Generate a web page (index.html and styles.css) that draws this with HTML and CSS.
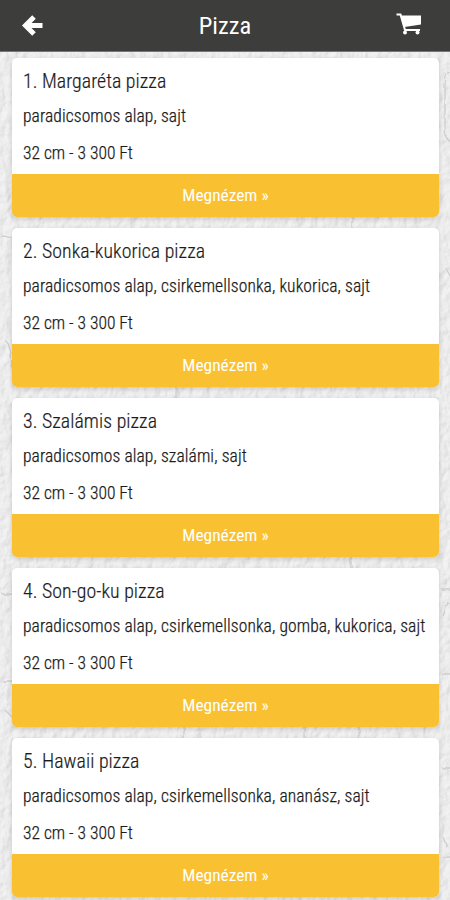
FILE: index.html
```html
<!DOCTYPE html>
<html lang="hu">
<head>
<meta charset="utf-8">
<title>Pizza</title>
<link rel="stylesheet" href="styles.css">
</head>
<body>
<svg class="wall" width="450" height="900" viewBox="0 0 450 900" aria-hidden="true">
  <defs>
    <filter id="plaster" x="0" y="0" width="100%" height="100%" color-interpolation-filters="sRGB">
      <feTurbulence type="fractalNoise" baseFrequency=".12 .09" numOctaves="5" seed="8"/>
      <feDiffuseLighting surfaceScale="1.3" lighting-color="#fff"><feDistantLight azimuth="35" elevation="68"/></feDiffuseLighting>
    </filter>
    <filter id="rough"><feTurbulence type="fractalNoise" baseFrequency=".12" numOctaves="2"/><feDisplacementMap in="SourceGraphic" scale="4"/><feGaussianBlur stdDeviation=".6"/></filter>
  </defs>
  <rect class="texture" width="450" height="900" filter="url(#plaster)"/>
  <g class="joints" filter="url(#rough)">
    <path d="M452 70q-7 3-7 15v45q0 9 7 13M2 236l12 2M2 594h13M2 681h13M442 590h10M442 674h10M442 768h10M442 857h10M352 216v13M176 385v14M351 556v13M184 726v13M304 726v13M359 726v13M5 340q8 8 6 28M5 710l9 9M443 837l4 10M445 267l7 12M443 616l5-14"/>
  </g>
</svg>
<header class="bar">
  <svg class="back" viewBox="0 0 22 24" aria-hidden="true"><path d="M12 3 3.500 11.500l8.500 8.500M4.500 11.500H20.500"/></svg>
  <h1><span>Pizza</span></h1>
  <svg class="cart" viewBox="0 0 26 24" aria-hidden="true"><path class="basket" d="M5 3.500h20v9L8.500 15z"/><path class="frame" d="M.5 2.500H4.500l4.500 15.500H24"/><circle cx="9" cy="20.600" r="2"/><circle cx="21.500" cy="20.600" r="2"/></svg>
</header>
<main>
  <article><div class="info"><h2>1. Margaréta pizza</h2><p>paradicsomos alap, sajt</p><p class="price">32 cm - 3 300 Ft</p></div><a class="view"><span>Megnézem »</span></a></article>
  <article><div class="info"><h2>2. Sonka-kukorica pizza</h2><p>paradicsomos alap, csirkemellsonka, kukorica, sajt</p><p class="price">32 cm - 3 300 Ft</p></div><a class="view"><span>Megnézem »</span></a></article>
  <article><div class="info"><h2>3. Szalámis pizza</h2><p>paradicsomos alap, szalámi, sajt</p><p class="price">32 cm - 3 300 Ft</p></div><a class="view"><span>Megnézem »</span></a></article>
  <article><div class="info"><h2>4. Son-go-ku pizza</h2><p>paradicsomos alap, csirkemellsonka, gomba, kukorica, sajt</p><p class="price">32 cm - 3 300 Ft</p></div><a class="view"><span>Megnézem »</span></a></article>
  <article><div class="info"><h2>5. Hawaii pizza</h2><p>paradicsomos alap, csirkemellsonka, ananász, sajt</p><p class="price">32 cm - 3 300 Ft</p></div><a class="view"><span>Megnézem »</span></a></article>
</main>
</body>
</html>
```
FILE: styles.css
```css
* { box-sizing: border-box; }
body { margin: 0; height: 900px; overflow: hidden; background: #ededed; color: #1c1c1c; font-family: "Roboto Condensed", Roboto, sans-serif; font-stretch: 75%; }
h1, h2, p { margin: 0; font-weight: 400; white-space: nowrap; }
.wall { position: absolute; left: 0; top: 0; z-index: -1; }
.texture { opacity: .4; }
.joints { fill: none; stroke: #cecece; stroke-width: 1.3; }
.bar { height: 52px; background: #3d3d3b; border-bottom: 1px solid #777; display: grid; grid-template-columns: 26px 1fr 26px; align-items: center; padding: 0 28px 2px 22px; color: #fff; }
.bar h1 { font-size: 24.500px; line-height: 30px; text-align: center; padding-left: 6px; margin-top: 2px; }
.back { width: 22px; height: 24px; fill: none; stroke: #fff; stroke-width: 5; margin-top: 2px; }
.cart { width: 26px; height: 24px; fill: #fff; margin-top: -1px; }
.frame { fill: none; stroke: #fff; stroke-width: 2; }
main { display: flex; flex-direction: column; gap: 11px; padding: 6px 11px 0 12px; }
article { height: 159px; flex: none; border-radius: 5px; overflow: hidden; background: #fff; box-shadow: 0 2px 5px rgba(0,0,0,.16); display: flex; flex-direction: column; }
.info { height: 116px; padding: 12px 11px 0; }
h2 { font-size: 19.800px; line-height: 24px; font-weight: 300; letter-spacing: .06px; -webkit-text-stroke: .2px currentColor; }
p { font-size: 17.500px; line-height: 20px; margin-top: 12px; font-weight: 300; letter-spacing: .09px; -webkit-text-stroke: .25px currentColor; }
.info .price { margin-top: 17px; letter-spacing: -.02px; }
.view { height: 43px; padding-bottom: 2px; background: #f9c131; color: #fff; display: flex; align-items: center; justify-content: center; font-size: 17.400px; }
```
